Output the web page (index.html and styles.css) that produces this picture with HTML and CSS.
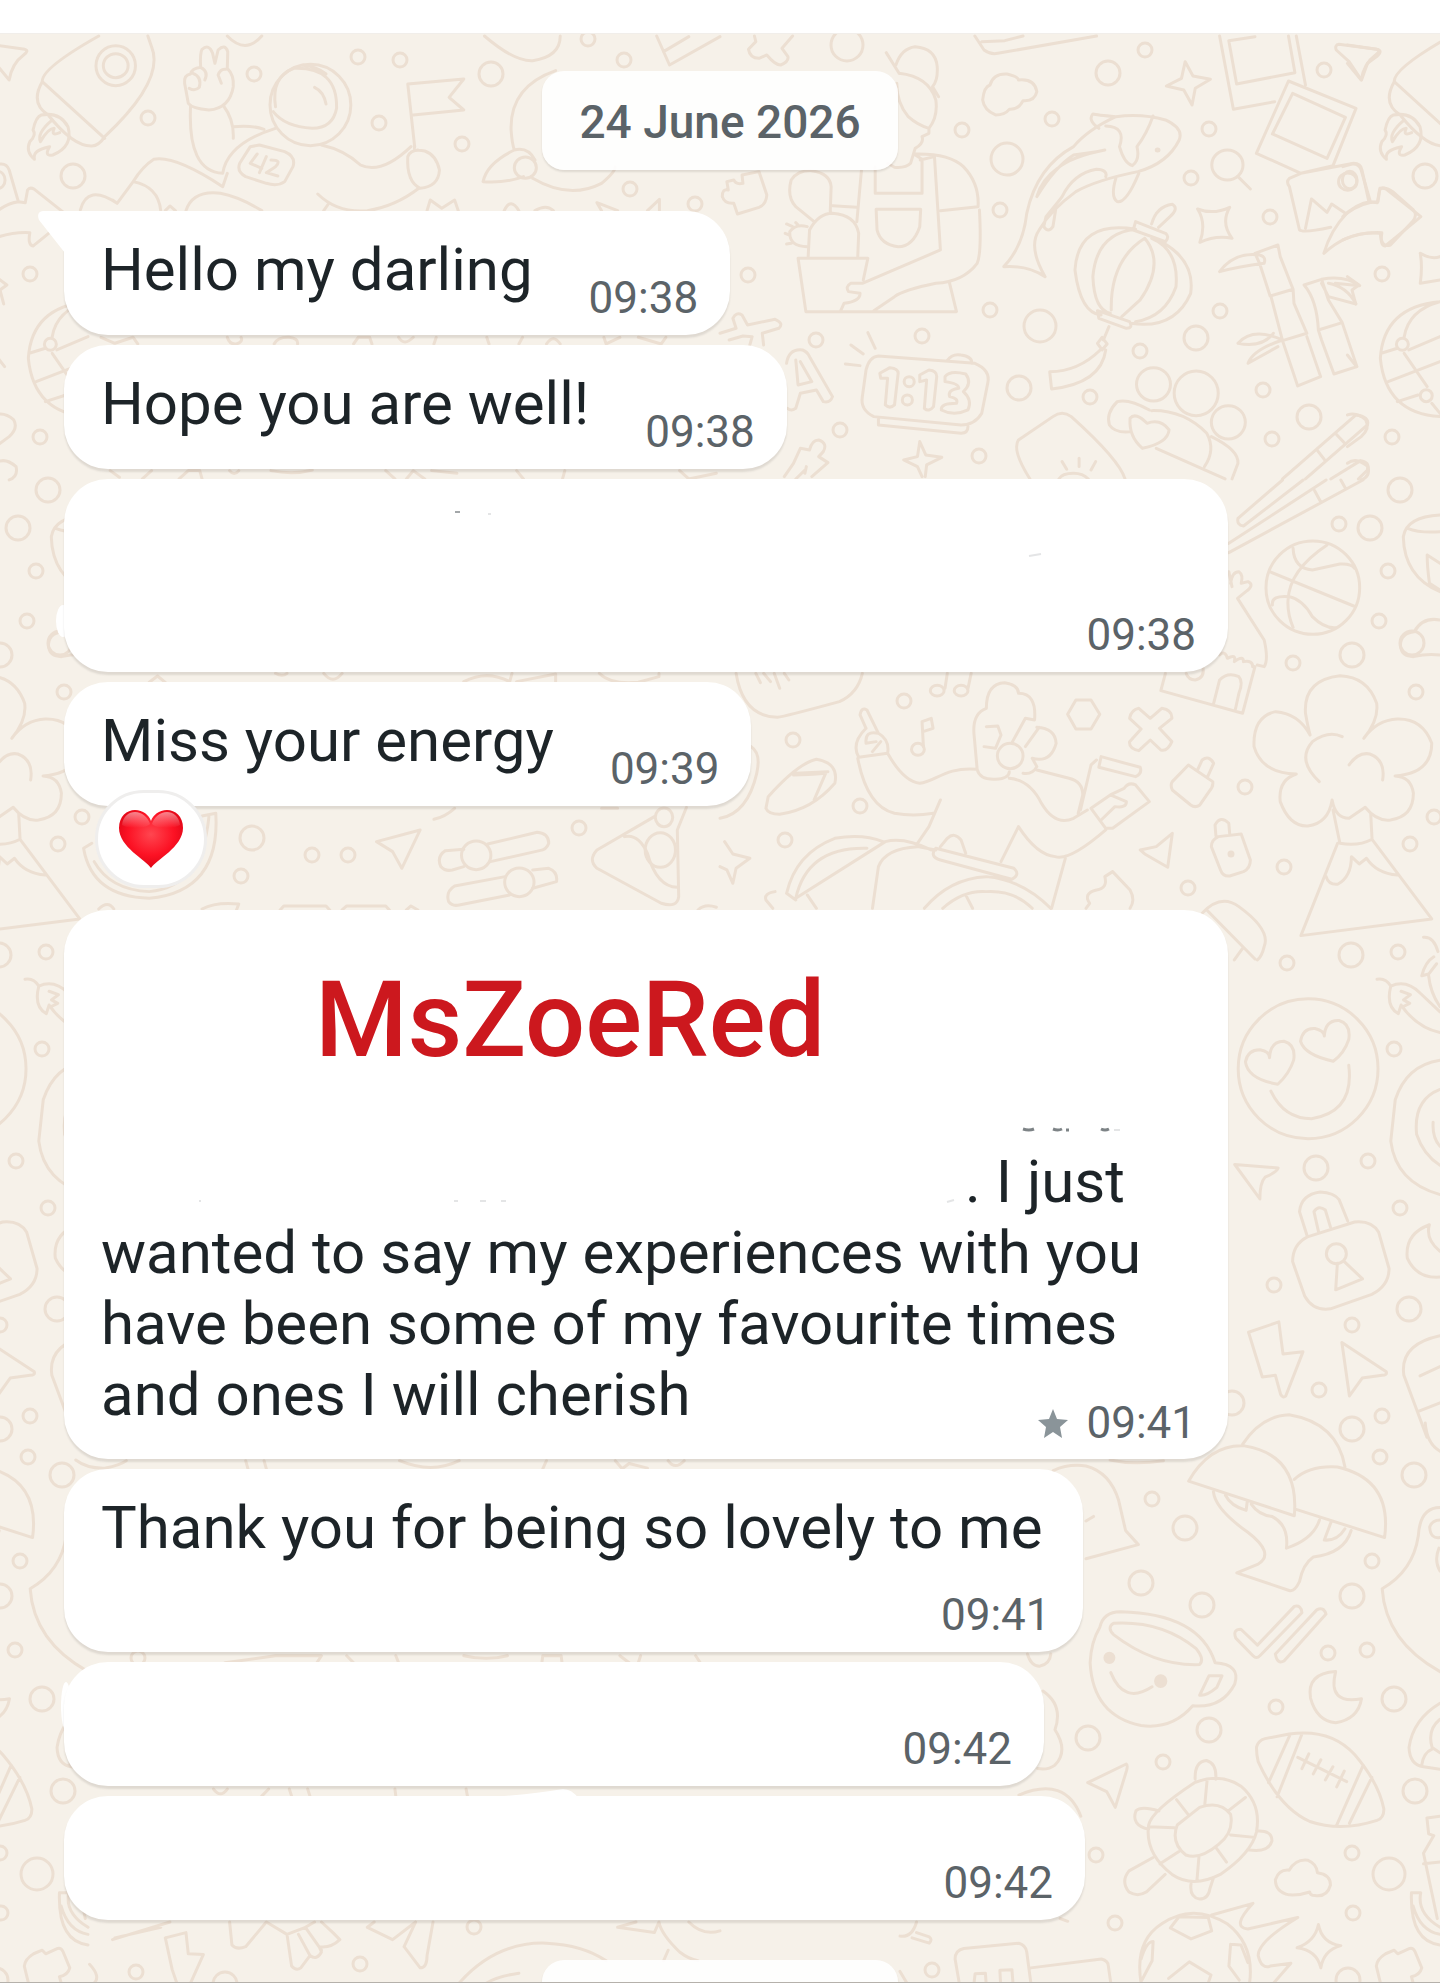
FILE: index.html
```html
<!DOCTYPE html>
<html lang="en">
<head>
    <meta charset="UTF-8">
    <meta name="viewport" content="width=device-width, initial-scale=1.0">
    <title>Chat</title>
    <link rel="stylesheet" href="styles.css">
</head>
<body>
    <header class="topbar"></header>
    <main class="chat">
        <svg class="wallpaper" width="1440" height="1983" viewBox="0 0 1440 1983" aria-hidden="true">
            <!-- rocket, repeats at the right edge -->
            <g id="rocket" transform="scale(.4592 .3333)">
                <path d="M-10 135L54 148Q64 152 52 164Q26 190 20 240L-10 190"/>
                <path d="M215 108Q90 205 92 245Q65 310 105 345Q160 440 200 438Q215 438 228 410Q360 240 330 140L322 108M92 245L228 415"/>
                <ellipse cx="252" cy="197" rx="43" ry="60"/><ellipse cx="252" cy="197" rx="27" ry="36"/>
                <path d="M90 345Q130 335 148 380Q160 440 115 465Q95 470 108 440Q70 450 75 478Q55 455 65 425Q80 405 72 390Q78 350 90 345ZM112 362Q80 400 88 425Q105 385 118 385Q110 410 130 398"/>
                <path d="M-20 500L0 492Q15 490 20 510L40 605L55 608L60 570Q65 560 75 568L150 650Q80 730 72 738Q60 735 65 698Q20 695-20 720M-20 650Q10 610 40 605"/>
                <ellipse cx="-5" cy="540" rx="16" ry="26"/>
                <path d="M-10 830L15 855L0 870L8 912M-10 1065L10 1100M-10 1245Q10 1235 30 1260Q40 1285 20 1310L-10 1340M-10 1390Q10 1370 35 1400Q40 1430 20 1440"/>
            </g>
            <use href="#rocket" x="1352"/>

            <!-- astronaut, flag, planet -->
            <g transform="scale(.4592 .3333)">
                <path d="M410 310Q405 270 402 250Q400 225 415 222Q418 205 437 202Q435 160 440 148Q455 130 463 160L468 190L475 150Q490 130 496 155L495 205Q510 225 508 260Q500 325 455 330Q418 325 410 310M420 220Q440 230 434 262Q425 275 412 265M437 202Q455 215 446 240M475 225Q480 205 492 208M475 225L482 250"/>
                <path d="M415 318Q408 515 485 520Q495 430 600 385M487 318Q510 360 508 415M508 380Q550 375 575 388M700 435Q750 450 785 495Q830 525 895 440M485 560L495 520M485 560Q380 465 335 478Q310 500 290 545L255 610Q190 550 175 630M290 545Q345 560 350 632M255 610L245 600M405 632Q420 570 480 580Q520 590 570 632M692 582Q735 640 800 632Q860 620 912 565M715 612L705 632M360 632L370 618L382 632"/>
                <ellipse cx="676" cy="315" rx="88" ry="122"/><path d="M640 205Q735 200 733 325Q725 385 680 385Q620 380 595 335M600 320Q590 230 640 205M660 196Q690 200 710 222M685 262Q705 275 710 312"/>
                <path d="M545 440L565 435L620 455Q645 470 638 500L620 545Q605 560 580 550L535 530Q515 515 522 490Z"/>
                <path d="M560 462L545 490L570 505M580 470L565 518M590 480Q615 480 600 500L580 518L605 528"/>
                <path d="M903 440L888 252L1010 237L978 292L1010 330L900 345"/>
                <path d="M888 470Q895 445 925 453Q950 465 957 510Q955 560 915 565Q885 545 888 470M903 440Q900 455 910 450"/>
                <path d="M495 108Q535 165 570 108M1055 108Q1120 185 1160 182Q1220 170 1220 108M1430 108L1458 195L1568 110M1445 155L1500 110"/>
                <path d="M1210 212Q1110 260 1113 390Q1115 430 1120 450M1160 535Q1240 600 1310 550Q1340 515 1340 500M1120 450Q1060 490 1052 545Q1100 550 1140 530M1120 450Q1150 440 1165 480"/>
                <ellipse cx="1144" cy="503" rx="24" ry="32"/>
                <path d="M930 632L937 600L962 625L990 600L998 632M1098 632Q1112 590 1130 632M1165 632Q1190 612 1205 632M1310 632L1300 608L1345 632M1410 632L1436 598L1436 632"/>
                <path d="M220 1012L250 1030L290 1012L300 1032M495 1012Q500 1035 515 1032Q530 1025 525 1012M597 1032Q605 1010 630 1012Q650 1015 648 1032M770 1032L780 1012L805 1012L810 1032M868 1012Q880 1040 900 1012M950 1012L945 1032M1060 1012L1065 1032M1130 1032L1138 1012M1190 1032Q1205 1000 1220 1032M1315 1012L1320 1032L1350 1012M1390 1012L1440 1032L1450 1012"/>
                <path d="M240 1412L260 1432M330 1412L310 1437M390 1437L410 1412L435 1412L440 1437M500 1412Q510 1430 520 1412M590 1412Q640 1425 680 1410M840 1412L860 1437M885 1437L900 1412L925 1437M940 1412L995 1420M1125 1412L1140 1437M1225 1437L1230 1412M1480 1412L1500 1437L1560 1420"/>
            </g>

            <!-- gardener, fish, lantern, photos, bamboo, clock -->
            <g transform="translate(720 0) scale(.4592 .3333)">
                <path d="M75 108L78 125L62 148Q65 175 85 175L102 165Q120 195 132 195Q150 185 148 170L135 145L158 108"/>
                <path d="M555 108L575 150Q590 165 605 160L820 108M570 125L620 122L660 108"/>
                <path d="M362 158L390 220M383 195Q395 145 425 140Q470 145 473 200Q475 240 463 260M390 220Q455 230 470 300Q475 350 455 385Q430 375 410 350Q385 310 385 250M455 385L455 400L440 410Q445 430 425 445L415 490Q405 505 380 502L365 490M463 260L476 290M425 462Q500 460 530 500Q565 550 562 620L480 632M467 470L480 750L310 850L285 850Q272 860 280 875L305 880Q305 905 270 910L262 935M422 462L440 478L440 580L338 580L338 500M436 480L467 470M308 512L298 665M245 617L298 622M565 630Q570 760 560 790Q530 845 470 850Q400 870 380 890L335 932M500 850L515 935L187 935L170 775L322 775L312 840M340 628L437 628L435 680Q420 740 388 740Q350 735 342 690Z"/>
                <path d="M192 770L195 690Q215 640 245 640Q295 645 302 700L300 770M205 665L165 620Q145 590 155 540Q170 510 200 512Q240 520 242 560L240 640M190 680Q165 670 152 695Q150 740 190 740M158 680L145 672M150 705L142 700M155 730L145 732M170 675L165 668"/>
                <path d="M5 590Q5 565 18 570L15 545L30 540Q35 555 50 550L48 525L85 515L102 585Q100 615 85 622L38 642L30 610Q10 612 5 590"/>
                <path d="M572 300Q575 260 588 255Q595 220 625 222Q650 230 650 240Q685 235 690 275Q685 305 660 302Q650 330 630 328Q620 345 600 345Q575 330 572 300Z"/>
                <path d="M1013 185L1030 228L1068 238L1035 265L1028 315L1010 270L972 258L1005 235ZM1040 627Q1075 645 1110 622Q1090 670 1115 715Q1080 705 1045 727Q1060 670 1040 627ZM1525 760Q1550 780 1568 770M1525 850Q1530 800 1525 760M1525 850L1568 840M435 1325L448 1365L483 1372L450 1395L447 1430M435 1325L430 1370L400 1380L430 1400L440 1430M1348 133L1430 148Q1445 152 1430 170L1410 190L1397 240L1370 185L1342 150Q1338 135 1348 133Z"/>
                <path d="M862 350Q920 340 970 360Q1010 385 1000 420Q975 490 910 515Q820 540 775 575Q720 630 695 690Q670 740 708 830Q670 795 618 800Q660 740 668 640Q690 500 770 440Q800 390 862 350ZM862 350Q820 345 812 342Q800 360 825 385M840 378Q885 380 870 440Q880 490 898 497Q915 480 908 440Q930 400 943 348M838 450Q765 470 735 505Q700 540 690 590Q730 500 770 465L820 455M840 530Q845 510 820 508Q770 520 745 590Q740 600 710 650L705 680Q715 700 725 680L732 620M862 535Q850 590 865 605Q885 610 912 520"/>
                <circle cx="953" cy="450" r="3"/>
                <path d="M1088 108L1118 328L1208 305M1108 122L1125 252L1252 218L1238 108M1108 122L1165 110M1255 108L1275 255M1238 243L1385 325L1335 497L1265 520L1168 460ZM1247 280L1203 402L1322 475L1362 352ZM1265 520L1240 535Q1232 545 1240 560L1262 690Q1270 700 1330 682M1265 520L1380 490Q1395 490 1398 510L1413 605M1275 685L1288 597L1322 637L1332 612L1362 640M1315 760Q1330 690 1365 640Q1400 605 1433 605L1437 565Q1450 560 1465 575L1510 630Q1520 645 1508 665L1460 735Q1440 745 1438 700Q1370 690 1315 760Z"/>
                <ellipse cx="1367" cy="545" rx="20" ry="26"/><ellipse cx="1105" cy="495" rx="34" ry="45"/><path d="M1128 530L1155 567"/>
                <path d="M905 688Q780 660 773 810Q785 940 830 945M960 725Q1035 780 1025 880Q990 990 895 970M905 688Q820 700 812 830Q815 930 850 940M925 715Q850 780 852 930M925 715Q970 790 915 900L875 950M940 715Q1000 750 993 860Q970 950 905 965M905 665L970 700Q980 710 970 725L900 690ZM822 932L892 965Q900 985 885 985L825 955ZM940 672Q950 620 985 613Q1000 625 980 650L955 682M847 980L835 1020M822 1030L832 1012L843 1032L832 1050ZM828 1050Q780 1115 718 1115L722 1167Q830 1150 840 1050"/>
                <path d="M1215 735L1220 770L1248 868L1198 888L1175 790L1165 760ZM1088 815Q1120 755 1175 765Q1190 770 1185 790Q1130 800 1088 815M1248 868L1250 910L1278 1000L1225 1022L1200 890M1225 1022L1258 1158L1308 1130L1278 1010M1272 855L1310 838L1325 900L1355 968L1303 990Q1300 900 1272 855M1303 990L1310 1020L1337 1122L1387 1100L1355 968M1310 838Q1360 825 1393 857L1340 850M1310 850L1325 890L1385 912Q1365 860 1325 850M1225 1020Q1160 980 1128 1030Q1180 1045 1205 1000M1225 1020Q1160 1050 1150 1090L1215 1040"/>
                <path d="M345 1068L555 1090Q590 1110 583 1150L570 1240Q555 1275 525 1275L335 1250Q305 1230 310 1190L318 1110Q325 1070 345 1068ZM495 1082Q505 1060 525 1065Q550 1070 548 1090M345 1255L345 1275L525 1300Q540 1300 540 1280M285 1035L312 1062M322 998L338 1045M273 1092L305 1097"/>
                <path d="M348 1120L370 1103Q388 1105 388 1120L380 1215Q370 1228 360 1215L365 1135L350 1135ZM435 1125L455 1110Q472 1112 472 1130L465 1220Q455 1238 445 1225L450 1140L435 1145ZM490 1130Q500 1110 535 1122Q550 1150 530 1175Q550 1200 540 1230Q510 1250 482 1230Q480 1210 515 1210Q520 1195 500 1190Q495 1170 520 1165Q520 1150 490 1145Z"/>
                <ellipse cx="412" cy="1145" rx="11" ry="15"/><ellipse cx="408" cy="1200" rx="11" ry="15"/>
                <path d="M0 1000L35 985L28 955Q35 935 48 945L60 975L120 958Q140 970 128 985L92 1000L95 1035M65 1035L70 1010L50 1008L20 1020M145 1090Q150 1045 180 1050Q190 1055 195 1070L245 1190Q240 1210 225 1205L210 1170L175 1180L165 1225Q155 1235 147 1225M165 1080L170 1155L200 1145L175 1085"/>
                <ellipse cx="944" cy="1153" rx="37" ry="50"/><ellipse cx="1037" cy="1180" rx="48" ry="67"/><ellipse cx="1107" cy="1267" rx="37" ry="50"/>
                <path d="M935 1230Q890 1195 865 1205Q840 1240 848 1275Q860 1300 895 1295M920 1345Q890 1310 893 1255Q905 1235 930 1270Q960 1255 978 1290Q975 1330 920 1345M940 1232Q1010 1230 1060 1300Q1080 1350 1055 1400M1070 1310Q1130 1350 1128 1390L1115 1437M950 1345L1100 1437"/>
                <path d="M675 1437Q635 1350 650 1320L725 1250Q745 1230 765 1250Q870 1380 882 1437M738 1437Q745 1420 770 1420Q790 1420 802 1437M782 1375L782 1400M745 1385L755 1408M818 1385L808 1410M165 1437L185 1410M140 1430L160 1390L175 1345L195 1350Q200 1320 215 1320Q235 1330 225 1355L215 1370L235 1388L200 1430M185 1420L188 1400"/>
                <path d="M1225 1437L1385 1245Q1415 1250 1410 1275L1275 1437M1340 1300L1362 1332M1300 1350L1318 1382M1330 1437L1395 1382Q1415 1385 1410 1410L1390 1437"/>
                <g id="beach"><path d="M1568 905Q1445 920 1438 1075Q1450 1240 1568 1250M1568 905Q1500 930 1490 1010M1440 1060L1475 1045M1500 1050L1568 1010M1490 1060L1540 1160M1455 1145L1568 1085M1475 1205L1520 1185M1550 1210L1568 1240"/><ellipse cx="1486" cy="1033" rx="13" ry="18"/><ellipse cx="1538" cy="1187" rx="13" ry="18"/></g>
            </g>
            <use href="#beach" transform="translate(-632 0) scale(.4592 .3333)"/>

            <!-- singer, cloud tree, volcano, basketball -->
            <g transform="translate(720 480) scale(.4592 .3333)">
                <path d="M1225 0L1128 115Q1125 135 1140 138L1270 0M1320 0L1108 190M1400 0L1108 218M1295 32L1308 65M1352 0L1362 25"/>
                <ellipse cx="1291" cy="323" rx="102" ry="140"/>
                <path d="M1197 275L1380 378M1322 195Q1240 270 1237 360Q1235 400 1248 442M1248 205Q1250 265 1290 270L1350 252Q1375 250 1382 265M1203 375Q1200 345 1240 350Q1270 360 1290 410Q1315 445 1340 443"/>
                <path d="M1108 275L1115 320M1112 310Q1115 275 1130 275Q1140 285 1135 310L1150 305Q1165 315 1145 335L1127 355L1185 480Q1195 540 1185 560L1170 555M1088 525Q1100 510 1105 535Q1125 520 1120 545Q1140 525 1140 545Q1160 540 1160 560M1165 560L1138 700L960 632L970 580M1015 580Q1020 600 1035 600Q1055 595 1052 565M1075 670L1088 600Q1105 575 1130 590Q1140 605 1130 640L1122 690"/>
                <path d="M35 580Q50 710 125 712Q140 710 260 665Q300 640 310 580M78 580L88 608M95 580L110 605M118 580L130 625M140 580L150 600"/>
                <ellipse cx="473" cy="632" rx="15" ry="16"/><ellipse cx="525" cy="632" rx="15" ry="16"/><path d="M490 625L495 580M540 625L547 580M443 800L440 725L460 715L464 745L442 755"/><ellipse cx="431" cy="808" rx="14" ry="18"/>
                <path d="M318 745L305 705Q308 680 320 690L345 760Q370 780 365 820L302 832Q285 790 318 745M345 760Q315 750 318 790L340 785M350 785L332 815M300 835Q320 980 380 1000Q420 1010 465 1000M365 820Q400 905 435 910C470 905 490 860 560 868M480 960L455 1040L430 1090M560 868L553 760Q550 700 580 685Q580 610 620 608Q650 615 650 640Q690 640 685 720L665 715L637 785M560 868Q565 900 600 898Q630 895 630 875M580 740L605 738L612 765L600 805L575 800M695 742L665 800M690 742Q730 745 732 790Q720 850 680 835M680 835L690 860Q680 885 660 880M690 870L760 895Q790 905 790 945L780 1000M630 895Q675 900 700 970Q730 1040 770 1015L800 990M808 985L850 945L880 925Q890 905 905 915L935 965L855 1045L840 1045L808 985M850 945L885 965Q885 985 860 980L830 1020M785 990L808 855L820 840M830 830L915 862Q920 880 905 890L825 862ZM840 1050Q760 1145 730 1130Q690 1125 650 1040L612 1145M752 1135L722 1285"/>
                <ellipse cx="632" cy="828" rx="28" ry="38"/>
                <path d="M775 660L808 660L827 703L808 747L775 747L757 703ZM912 685L937 715L962 685Q985 690 984 715L957 745L984 785Q975 815 960 810L937 780L912 812Q890 805 892 785L917 747L892 715Q895 690 912 685ZM1020 855L1073 905Q1075 920 1065 935L1045 975Q1035 985 1025 975L985 930Q980 915 985 905ZM1040 870L1050 840Q1065 825 1075 850L1062 890"/>
                <path d="M1085 1070L1135 1062L1155 1140Q1155 1165 1140 1175L1110 1188Q1095 1190 1090 1170L1070 1100Q1070 1080 1085 1070ZM1080 1068L1078 1035Q1090 1005 1108 1030L1110 1062M915 1110L950 1100L985 1060L975 1162L925 1122ZM855 1175L893 1230Q905 1260 893 1285M855 1175L838 1190Q845 1225 820 1230Q790 1240 805 1270L797 1285"/>
                <path d="M100 985L105 950Q170 850 210 838Q260 850 250 910Q200 990 130 1003Q105 1003 100 985M165 880L235 875M160 885Q190 885 230 880L205 960M68 800Q90 820 80 880Q60 1000 0 1015M10 1085L28 1122L65 1135L35 1165L28 1210L15 1170L0 1160M145 1240Q165 1120 250 1075Q310 1060 355 1085M165 1255Q190 1100 320 1105M165 1255L360 1085Q400 1070 460 1110M120 1235Q95 1240 100 1260L115 1285M145 1240L165 1260M190 1245L210 1285M332 1285L345 1160Q360 1105 430 1100L470 1110M470 1105L640 1165Q655 1185 635 1198L480 1140Q455 1130 470 1105M480 1100L495 1075Q510 1055 525 1080L535 1120M445 1285Q500 1195 580 1190Q660 1200 720 1285M485 1285Q530 1230 580 1235Q640 1230 680 1285M537 1250L550 1285"/>
                <g id="trees">
                    <path d="M1285 765Q1260 700 1210 695Q1160 710 1163 800Q1180 880 1255 882Q1215 900 1220 965Q1240 1040 1280 1038Q1325 1030 1333 960Q1340 1015 1370 1015L1405 982Q1430 1025 1460 1020Q1510 1010 1510 940Q1505 890 1470 888Q1550 880 1550 790Q1530 715 1475 717Q1430 720 1402 775Q1435 720 1430 670Q1410 590 1350 587Q1270 600 1275 700Q1280 740 1285 765M1355 770Q1325 750 1290 785Q1255 840 1305 905M1370 855Q1390 815 1415 822Q1450 840 1443 900M1335 990L1350 1090Q1390 1100 1420 1078L1417 1000M1345 1090L1265 1367L1550 1317L1420 1078M1320 1190Q1325 1215 1345 1213Q1375 1190 1375 1130L1392 1152L1408 1135Q1430 1180 1475 1185"/>
                    <path d="M1568 335Q1490 290 1488 170Q1495 110 1568 105M1497 145Q1525 160 1568 155M1540 225Q1540 260 1545 310L1568 330M1540 225L1568 250M1568 420Q1530 410 1512 455Q1480 460 1482 500Q1485 530 1510 530Q1540 520 1568 525"/>
                </g>
                <path d="M1050 1300Q1090 1240 1130 1280Q1200 1350 1185 1400Q1180 1430 1170 1440M1060 1290L1165 1437M1120 1440L1138 1405"/>
            </g>
            <use href="#trees" transform="translate(-632 480) scale(.4592 .3333)"/>

            <!-- watermelon, sliders, pizza -->
            <g transform="translate(0 480) scale(.4592 .3333)">
                <path d="M200 1090L182 1105Q200 1250 325 1255Q480 1235 470 1000L440 1008M205 1145Q240 1230 325 1235Q440 1220 455 1010"/>
                <path d="M820 1085L915 1050L875 1165L855 1115ZM1010 1108L970 1112Q950 1130 960 1160Q970 1175 985 1170L1010 1160M1062 1092L1170 1057Q1195 1060 1195 1090Q1190 1110 1175 1112L1068 1145M1100 1190L990 1218Q970 1235 977 1265Q985 1280 1000 1275L1110 1245M1160 1170L1195 1165Q1215 1175 1212 1205L1160 1225"/>
                <ellipse cx="1037" cy="1126" rx="32" ry="43"/><ellipse cx="1131" cy="1207" rx="32" ry="43"/>
                <path d="M1425 1010L1300 1110Q1280 1140 1300 1165L1440 1270Q1475 1285 1478 1250L1475 1050L1495 982M1360 1070Q1390 1060 1410 1120Q1430 1220 1475 1222"/>
                <ellipse cx="1438" cy="1110" rx="33" ry="52"/><ellipse cx="1446" cy="1012" rx="19" ry="28"/>
                <path d="M325 607L343 588L360 607M1010 605Q1060 570 1110 605L1115 580M1125 605L1210 582L1210 605M1305 580Q1330 615 1390 607L1435 590L1435 580M600 580Q615 592 625 580M705 580Q725 615 745 580M945 1018Q970 1010 990 985M1310 985L1345 985M215 1287Q235 1260 248 1287M440 1287Q470 1265 520 1272L515 1290M610 1290L618 1278L710 1278L718 1290M745 1290L755 1278L840 1278L848 1290M885 1290L895 1278L910 1290M1520 1290Q1535 1270 1560 1282"/>
            </g>

            <!-- smiley, shell, lock, bolt, cup, football, turtle -->
            <g id="right" transform="translate(900 900) scale(.3444)">
                <circle cx="1185" cy="490" r="203"/>
                <path d="M1073 458Q1075 410 1115 410Q1150 420 1143 465Q1130 505 1097 535Q1010 520 1003 470Q1010 435 1045 435Q1073 440 1073 458ZM1232 395Q1235 348 1275 350Q1310 360 1303 405Q1290 445 1258 468Q1175 450 1163 410Q1170 370 1205 373Q1232 380 1232 395ZM1077 555Q1115 635 1195 635Q1320 615 1303 480"/>
                <path d="M1385 230Q1410 225 1425 250M1425 250Q1470 230 1510 270L1568 325M1425 250Q1410 310 1447 330L1455 305Q1500 370 1568 385M1455 265L1482 275L1462 290L1480 300L1460 310M1520 108Q1550 105 1562 150M1550 165Q1525 180 1515 220L1535 215L1558 185M1535 220Q1540 270 1568 310"/>
                <path d="M1568 465Q1470 480 1438 580L1425 700Q1440 820 1568 855M1568 550Q1490 580 1500 680Q1520 740 1568 770M1548 645Q1545 690 1568 715"/>
                <path d="M972 768L1098 778Q1095 790 1060 805Q1045 820 1045 868ZM1183 978L1160 905Q1165 855 1220 848Q1260 850 1275 870L1300 932M1215 962L1202 905Q1215 885 1235 900L1250 950M1183 978L1320 935Q1370 930 1390 965L1420 1070Q1420 1120 1370 1145L1250 1187Q1200 1195 1175 1150L1140 1050Q1140 1000 1183 978M1270 1055L1265 1132L1343 1100L1290 1050"/>
                <circle cx="1267" cy="1027" r="29"/>
                <path d="M1537 943Q1465 970 1473 1040Q1500 1100 1568 1095M1537 943Q1525 985 1568 1020M1012 1255L1100 1225L1112 1318L1170 1312L1120 1440Q1112 1448 1105 1435L1090 1380L1052 1385ZM1283 1285L1412 1370Q1415 1380 1400 1380L1342 1388L1305 1440ZM1568 1265Q1450 1290 1463 1380L1530 1560M1510 1382L1568 1355M1505 1485L1568 1460"/>
            </g>
            <g id="low" transform="translate(900 1430) scale(.3444 .3527)">
                <path d="M995 40Q1050-40 1130-43Q1270-20 1292 105M838 145Q900 40 1000 45Q1160 70 1145 243ZM1145 140Q1190 100 1270 105Q1430 140 1407 305L1150 225M910 175Q915 225 1010 290Q1090 350 1040 380L978 405L1130 455Q1145 460 1160 430Q1170 380 1200 360Q1290 350 1310 285M945 185Q960 215 1005 228L1008 205M1020 210Q1040 240 1080 245Q1130 270 1122 335Q1200 310 1218 255M1252 260L1232 312Q1270 315 1292 280"/>
                <path d="M445 115Q490 95 540 102Q610 120 635 200L655 285L692 325L540 365M540 258L562 245M610 85Q680 100 765 87M370 635Q380 670 405 670Q435 665 438 635M415 740Q475 780 450 850Q490 910 450 950Q430 965 400 960M345 1035Q480 980 525 1095M465 1385L487 1393"/>
                <path d="M580 560Q590 515 640 515Q870 520 915 660Q990 665 972 720Q935 790 850 782Q790 850 700 838Q560 810 552 660Q555 600 580 560M620 548Q600 560 620 580Q740 670 870 665Q885 650 860 620Q760 540 620 548M897 697L935 697L920 730Q890 755 870 752ZM612 688Q650 780 732 728"/>
                <g class="fill"><circle cx="608" cy="646" r="13"/><circle cx="757" cy="712" r="15"/></g>
                <path d="M975 590Q965 565 990 565L1038 610L1145 500Q1165 495 1167 518L1045 640Q1035 650 1025 640ZM1090 635L1210 510Q1230 500 1237 522L1115 655Q1095 665 1090 635"/>
                <path d="M1265 685Q1180 690 1192 760Q1210 825 1265 830Q1330 820 1340 762Q1240 780 1265 685"/>
                <path d="M1035 900Q1040 880 1060 875L1130 862Q1250 845 1320 920Q1390 1000 1405 1075Q1405 1100 1385 1107Q1280 1140 1190 1110Q1100 1070 1040 940Q1035 920 1035 900ZM1132 865L1070 1000M1168 860L1095 1040M1345 950L1268 1120M1370 985L1305 1115M1155 928L1297 997M1187 918L1167 960M1222 935L1200 975M1257 955L1235 992M1290 967L1268 1012"/>
                <path d="M855 1000Q930 970 990 1010Q1050 1060 1035 1140Q1020 1200 930 1260Q850 1300 790 1260Q710 1200 722 1120Q730 1080 855 1000ZM870 1070Q930 1050 960 1090Q970 1140 925 1175Q870 1220 830 1205Q785 1170 805 1120ZM892 990L885 1062M1003 1042L953 1080M960 1148L1030 1155M918 1185L948 1225M868 1210L862 1280M810 1195L755 1230M797 1128L722 1125M838 1092L803 1048M857 990Q855 940 890 937Q920 945 917 990M752 1080Q700 1065 685 1080Q670 1120 722 1132M1038 1137Q1080 1135 1080 1165Q1070 1200 1010 1190M735 1212L665 1250Q640 1280 665 1310Q690 1325 715 1310L770 1260M845 1287Q840 1325 870 1330Q895 1330 900 1300L910 1270"/>
                <path d="M1130 1318Q1090 1310 1090 1275Q1100 1245 1130 1248Q1150 1215 1185 1220Q1210 1230 1212 1255Q1250 1260 1250 1290Q1240 1325 1205 1320Q1190 1320 1190 1310Q1160 1320 1130 1318ZM1215 1402Q1225 1455 1280 1462Q1230 1475 1222 1525Q1210 1475 1153 1468Q1205 1450 1215 1402ZM545 1000L657 947Q662 950 658 965L625 1070L600 1025ZM1383 1520Q1385 1500 1410 1485L1435 1475L1445 1485L1480 1470Q1490 1468 1495 1478L1515 1525Q1510 1545 1485 1550L1490 1568M1395 1568L1383 1520"/>
                <path d="M700 1568Q680 1450 760 1400Q850 1340 950 1400Q1030 1460 1015 1568M785 1412L810 1380L895 1382L905 1420L845 1443ZM735 1450L732 1505L702 1560M735 1450Q715 1450 700 1500M780 1555L840 1508L903 1545L895 1568M960 1458L955 1520L985 1560M960 1458L990 1460L1010 1510M905 1375L1025 1342Q960 1410 1010 1415L1155 1382Q1040 1450 1040 1490Q1050 1530 1075 1520L1135 1512L1085 1568M160 1500Q160 1475 185 1470L345 1455Q365 1460 368 1480L380 1568M172 1568L160 1500M380 1525L585 1500Q605 1505 605 1520L612 1568M215 1568L218 1542L248 1540L250 1568M292 1568L290 1532L325 1530L328 1568M0 1435Q35 1440 48 1395M35 1440L85 1455Q95 1445 85 1437L48 1425M0 1535L20 1568"/>
                <path d="M1568 685Q1410 600 1400 450Q1490 400 1505 300Q1510 220 1568 220M1568 305Q1540 310 1538 275Q1545 255 1568 255M1568 400Q1550 370 1565 335M1568 775Q1490 820 1478 900Q1480 950 1520 955L1568 962M1568 820Q1530 850 1545 900L1568 915M1515 950Q1520 915 1545 905M1530 1100L1535 1145L1550 1150L1520 1200L1560 1385M1530 1100L1568 1095M1520 1230L1568 1225M1485 1312L1512 1312Q1500 1370 1568 1410M1485 1312Q1480 1450 1568 1460M1490 1350Q1510 1420 1568 1430M1568 60Q1530 40 1525-20"/>
            </g>
            <use href="#right" transform="translate(-1352 0)"/>
            <use href="#low" transform="translate(-1352 0)"/>
            <!-- strip under the last message -->
            <g transform="translate(0 1430) scale(.4592 .3527)">
                <path d="M360 1440L405 1425L410 1485L443 1487L415 1568M385 1568L375 1530L360 1440M500 1395L505 1460Q515 1475 535 1465L580 1395L625 1430L635 1520Q645 1535 655 1525L675 1490Q690 1505 700 1480L695 1465Q720 1470 740 1445L725 1425L700 1395M650 1430L675 1490M665 1410L700 1475M625 1430L665 1410L685 1395M800 1410L855 1445L905 1395M800 1410L815 1395M880 1465L915 1525Q930 1525 930 1490L943 1395M880 1465L905 1395M1345 1410L1425 1425L1435 1395M1345 1410L1385 1395M1435 1395Q1440 1430 1480 1480Q1500 1500 1520 1505M1500 1395Q1530 1435 1568 1420M1455 1475L1445 1505M1000 1568Q1080 1450 1190 1455Q1270 1460 1320 1505M1060 1568Q1080 1550 1130 1540M195 1515Q220 1550 205 1568M245 1445L370 1395M250 1440L350 1410"/>
                <path d="M165 85Q190 110 230 108Q260 100 275 87M535 87L540 110M575 87L580 110M870 87Q940 125 1000 87M1190 87L1182 110M1340 87L1355 110L1370 95L1410 108M1455 87Q1470 115 1490 87M490 660L600 640L700 640L690 660M755 640L770 660M862 640L868 660M1010 640Q1060 655 1105 640M1180 660L1182 640L1222 640L1224 660M1350 640L1370 660M1390 660L1395 640M1515 640L1525 660M465 1018Q480 1045 495 1018M570 1038L585 1018M630 1018L635 1038M670 1018L675 1038M860 1018L862 1038M1015 1018L1018 1038"/>
            </g>

            <g class="s">
                <circle cx="148" cy="118"/><circle cx="254" cy="74"/><circle cx="358" cy="57"/><circle cx="400" cy="60"/><circle cx="379" cy="123"/><circle cx="462" cy="144"/><circle cx="588" cy="39"/><circle cx="624" cy="60"/><circle cx="630" cy="189"/><circle cx="695" cy="204"/>
                <circle cx="1145" cy="50"/><circle cx="1324" cy="70"/><circle cx="1052" cy="119"/><circle cx="962" cy="130"/><circle cx="1209" cy="129"/><circle cx="1191" cy="178"/><circle cx="1000" cy="210"/><circle cx="1270" cy="217"/><circle cx="748" cy="275"/><circle cx="990" cy="310"/><circle cx="1220" cy="311"/><circle cx="816" cy="340"/><circle cx="922" cy="336"/><circle cx="1140" cy="351"/><circle cx="1090" cy="397"/><circle cx="1263" cy="390"/><circle cx="840" cy="430"/><circle cx="1272" cy="439"/><circle cx="979" cy="456"/>
                <circle cx="904" cy="701"/><circle cx="793" cy="740"/><circle cx="860" cy="806"/><circle cx="785" cy="840"/><circle cx="1339" cy="524"/><circle cx="1293" cy="663"/><circle cx="1245" cy="787"/><circle cx="1284" cy="867"/><circle cx="1188" cy="888"/><circle cx="312" cy="855"/><circle cx="348" cy="855"/><circle cx="241" cy="876"/><circle cx="579" cy="828"/>
                <circle cx="1287" cy="963"/><circle cx="1274" cy="1285"/><circle cx="1319" cy="1390"/><circle cx="1152" cy="1499"/><circle cx="1328" cy="1653"/><circle cx="1276" cy="1707"/><circle cx="1163" cy="1762"/><circle cx="1096" cy="1855"/><circle cx="1115" cy="1923"/><circle cx="932" cy="1970"/><circle cx="360" cy="1964"/><circle cx="474" cy="1927"/><circle cx="136" cy="1972"/><circle cx="138" cy="1658"/>
            </g>
            <g class="fill"><circle cx="1231" cy="854" r="2"/></g>
            <g class="m">
                <circle cx="491" cy="74"/><circle cx="1108" cy="73"/><circle cx="1019" cy="388"/><circle cx="1309" cy="417"/><circle cx="1196" cy="338"/><circle cx="252" cy="838"/><circle cx="1316" cy="1168"/><circle cx="1232" cy="1403"/><circle cx="1185" cy="1528"/><circle cx="1141" cy="1583"/><circle cx="1202" cy="1605"/><circle cx="1209" cy="1730"/><circle cx="1088" cy="1738"/><circle cx="225" cy="1984"/>
            </g>
            <g class="l"><circle cx="847" cy="45"/><circle cx="1007" cy="159"/><circle cx="1040" cy="326"/></g>
            <!-- dots of the repeating edge column -->
            <g id="edge">
                <g class="s"><circle cx="1382" cy="274"/><circle cx="1392" cy="437"/><circle cx="1388" cy="571"/><circle cx="1379" cy="621"/><circle cx="1416" cy="692"/><circle cx="1410" cy="844"/><circle cx="1434" cy="817"/><circle cx="1398" cy="952"/><circle cx="1394" cy="1049"/><circle cx="1368" cy="1161"/><circle cx="1400" cy="1208"/><circle cx="1352" cy="1325"/><circle cx="1382" cy="1416"/><circle cx="1380" cy="1457"/><circle cx="1372" cy="1561"/><circle cx="1367" cy="1650"/><circle cx="1352" cy="1853"/><circle cx="1353" cy="1913"/></g>
                <g class="m"><circle cx="1425" cy="176"/><circle cx="1400" cy="490"/><circle cx="1370" cy="528"/><circle cx="1352" cy="655"/><circle cx="1412" cy="643"/><circle cx="1351" cy="955"/><circle cx="1409" cy="1309"/><circle cx="1352" cy="1429"/><circle cx="1414" cy="1475"/><circle cx="1352" cy="1596"/><circle cx="1394" cy="1699"/><circle cx="1415" cy="1791"/><circle cx="1348" cy="1980"/></g>
                <g class="l"><circle cx="1389" cy="1874"/></g>
            </g>
            <use href="#edge" x="-1352"/>
            <g class="smudge"><ellipse cx="63" cy="621" rx="7" ry="16"/><ellipse cx="66" cy="1706" rx="5" ry="24"/><path d="M460 1799Q530 1795 563 1789Q572 1789 579 1799Z"/></g>
        </svg>

        <time class="date" datetime="2026-06-24">24 June 2026</time>

        <ul class="messages">
            <li class="message first">
                <svg class="tail" width="28" height="42" viewBox="0 0 28 42" aria-hidden="true"><path d="M28 0H6Q-1 1 2 9L28 42Z"/></svg>
                <p>Hello my darling</p>
                <time>09:38</time>
            </li>
            <li class="message">
                <p>Hope you are well!</p>
                <time>09:38</time>
            </li>
            <li class="message blank tall">
                <svg class="specks" width="1164" height="193" viewBox="0 0 1164 193" aria-hidden="true"><path d="M391 33h5"/><path class="faint" d="M424 35h3M965 77l12-2"/></svg>
                <time>09:38</time>
            </li>
            <li class="message">
                <p>Miss your energy</p>
                <time>09:39</time>
            </li>
            <li class="reaction-row">
                <button class="reaction" type="button" aria-label="Heart reaction">
                    <svg width="66" height="60" viewBox="0 0 66 60" aria-hidden="true">
                        <defs>
                            <radialGradient id="red" cx=".5" cy=".42" r=".6"><stop offset="0" stop-color="#ff4650"/><stop offset=".6" stop-color="#fc1224"/><stop offset="1" stop-color="#dc0414"/></radialGradient>
                            <linearGradient id="shine" x1="0" y1="0" x2="0" y2="1"><stop offset="0" stop-color="#fff" stop-opacity=".5"/><stop offset="1" stop-color="#fff" stop-opacity="0"/></linearGradient>
                        </defs>
                        <path d="M33 59C28 51 1 38 1 19C1 7 9 1 17 1C25 1 31 6 33 12C35 6 41 1 49 1C57 1 65 7 65 19C65 38 38 51 33 59Z" fill="url(#red)"/>
                        <path d="M4 16C5 7 11 3 17 3C24 3 30 8 32 15C27 20 10 20 4 16ZM34 15C36 8 42 3 49 3C55 3 61 7 62 16C56 20 39 20 34 15Z" fill="url(#shine)"/>
                    </svg>
                </button>
            </li>
            <li class="message long">
                <svg class="specks" width="1164" height="549" viewBox="0 0 1164 549" aria-hidden="true"><path class="thick" d="M959 219q6 2 11 0M989 219q5 2 9 0M1002 220h3M1037 219q4 2 8 0"/><path class="faint" d="M1050 220h6M390 291h4M416 291h6M437 291h5M883 292l7-2M135 291h2"/></svg>
                <strong class="name">MsZoeRed</strong>
                <p class="lead">. I just</p>
                <p class="middle">wanted to say my experiences with you have been some of my favourite times</p>
                <div class="last">
                    <p>and ones I will cherish</p>
                    <div class="meta">
                        <svg width="34" height="33" viewBox="0 0 34 33" aria-label="Starred" role="img"><path d="M17 2L21 12L32 13L24 20L26 31L17 25L8 31L10 20L2 13L13 12Z"/></svg>
                        <time>09:41</time>
                    </div>
                </div>
            </li>
            <li class="message stacked">
                <p>Thank you for being so lovely to me</p>
                <time>09:41</time>
            </li>
            <li class="message blank short">
                <time>09:42</time>
            </li>
            <li class="message blank medium">
                <time>09:42</time>
            </li>
        </ul>

        <div class="date next"></div>
    </main>
</body>
</html>
```

FILE: styles.css
```css
* {
    box-sizing: border-box;
}
body {
    display: flex;
    flex-direction: column;
    height: 100vh;
    margin: 0;
    overflow: hidden;
    font-family: Roboto, "Liberation Sans", sans-serif;
    color: #1d2428;
    background: #fff;
}
.topbar {
    flex: none;
    height: 34px;
    border-bottom: 1px solid #f1eeea;
}
.chat {
    position: relative;
    flex: 1;
    min-height: 0;
    display: flex;
    flex-direction: column;
    align-items: center;
    padding: 37px 64px 0;
    overflow: hidden;
    background: #f6f1e9;
    border-bottom: 1px solid #b5b1ab;
}

/* doodle wallpaper */
.wallpaper {
    position: absolute;
    top: -34px;
    left: 0;
    fill: none;
    stroke: #ecdfd2;
    stroke-width: 3px;
    stroke-linecap: round;
    stroke-linejoin: round;
}
.wallpaper * {
    vector-effect: non-scaling-stroke;
}
.wallpaper .s circle {
    r: 7px;
}
.wallpaper .m circle {
    r: 12px;
}
.wallpaper .l circle {
    r: 16px;
}
.wallpaper .fill {
    fill: #ecdfd2;
}
.wallpaper .smudge {
    fill: #fff;
    stroke: none;
}

.date {
    position: relative;
    flex: none;
    min-width: 356px;
    height: 99px;
    padding: 0 32px;
    border-radius: 22px;
    background: rgba(255, 255, 255, 0.9);
    box-shadow: 0 2px 2px rgba(60, 50, 40, 0.12);
    font-size: 46px;
    font-weight: 500;
    line-height: 102px;
    text-align: center;
    color: #5b6368;
}
.next {
    margin-top: 40px;
}

.messages {
    position: relative;
    align-self: stretch;
    display: flex;
    flex-direction: column;
    align-items: flex-start;
    gap: 10px;
    margin: 41px 0 0;
    padding: 0;
    list-style: none;
}
.message {
    position: relative;
    display: flex;
    align-items: flex-end;
    gap: 56px;
    max-width: 1164px;
    min-height: 124px;
    padding: 23px 32px 11px 37px;
    border-radius: 44px;
    background: #fff;
    box-shadow: 0 3px 2px rgba(60, 50, 40, 0.12);
}
.message p {
    margin: 0 0 19px;
    font-size: 60px;
    line-height: 71px;
}
.message time {
    font-size: 44px;
    line-height: 52px;
    color: #5b6368;
}
.first {
    border-top-left-radius: 0;
}
.tail {
    position: absolute;
    top: 0;
    left: -27px;
    fill: #fff;
}
.specks {
    position: absolute;
    top: 0;
    left: 0;
    fill: none;
    stroke: #a3a7a9;
    stroke-width: 2px;
}
.specks .thick {
    stroke: #7d8386;
    stroke-width: 3px;
}
.specks .faint {
    stroke: #e4e5e6;
}

.blank {
    justify-content: flex-end;
}
.tall {
    width: 1164px;
    height: 193px;
}
.short {
    width: 980px;
}
.medium {
    width: 1021px;
}

.reaction-row {
    position: relative;
    margin: -26px 0 12px 31px;
}
.reaction {
    display: flex;
    align-items: center;
    justify-content: center;
    width: 112px;
    height: 98px;
    padding: 0;
    border: 3px solid #efeeed;
    border-radius: 49px;
    background: #fff;
}

.long {
    display: block;
    width: 1164px;
    padding-bottom: 10px;
}
.name {
    display: block;
    height: 213px;
    padding: 16px 0 0 214px;
    font-size: 106px;
    font-weight: 500;
    line-height: 142px;
    color: #cc181e;
}
.long .lead {
    margin: 0;
    padding-left: 864px;
}
.long .middle {
    margin: 0;
}
.last {
    display: flex;
    align-items: flex-end;
    justify-content: space-between;
}
.meta {
    display: flex;
    align-items: center;
    gap: 16px;
}
.meta svg {
    fill: #8a9499;
}

.stacked {
    flex-direction: column;
    gap: 7px;
}
.stacked p {
    padding-right: 8px;
}
```
